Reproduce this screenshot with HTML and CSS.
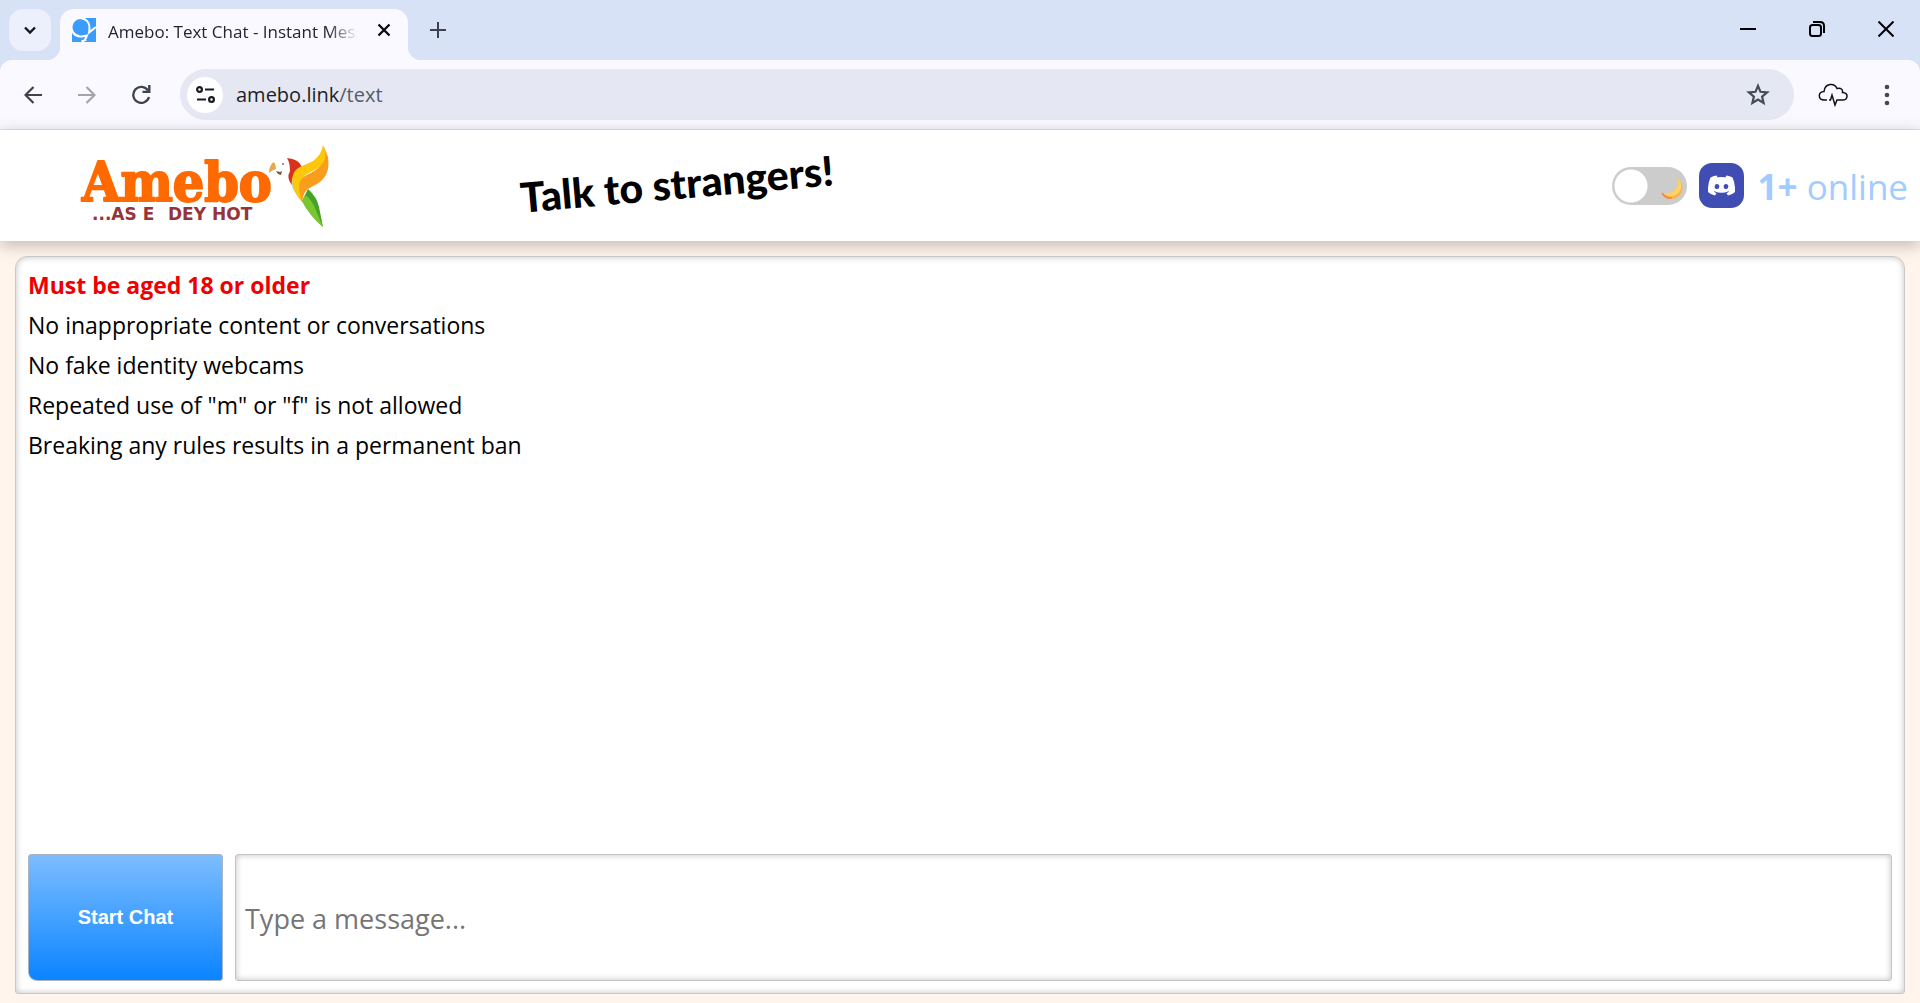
FILE: index.html
```html
<!DOCTYPE html>
<html lang="en">
<head>
<meta charset="utf-8">
<title>Amebo: Text Chat - Instant Messaging</title>
<link rel="stylesheet" href="styles.css">
</head>
<body>
<div class="browser">
  <div class="tab-strip">
    <button class="tab-search" aria-label="Search tabs">
      <svg width="14" height="14" viewBox="0 0 14 14"><path d="M2 4.500l5 5 5-5" fill="none" stroke="#15181f" stroke-width="2.400"/></svg>
    </button>
    <div class="tab">
      <svg class="favicon" width="24" height="24" viewBox="0 0 24 24">
        <rect width="24" height="24" fill="#3b9cff"/>
        <path d="M0 0h5Q1 3 0 8z" fill="#fff"/>
        <path d="M7 18A9 9 0 1 1 17.500 9q0 3-.5 5.500L24 9M1 15q3 4 9 3.500l5-1q-1 4-5 7M9.500 23l5-1.500" fill="none" stroke="#fff" stroke-width="2"/>
      </svg>
      <span class="tab-title">Amebo: Text Chat - Instant Mess</span>
      <button class="tab-close" aria-label="Close tab">
        <svg width="14" height="14" viewBox="0 0 14 14"><path d="M1.500 1.500l11 11M12.500 1.500l-11 11" stroke="#0b0c0f" stroke-width="2.400"/></svg>
      </button>
    </div>
    <button class="new-tab" aria-label="New tab">
      <svg width="16" height="16" viewBox="0 0 16 16"><path d="M8 0v16M0 8h16" stroke="#3b414d" stroke-width="2"/></svg>
    </button>
    <div class="window-buttons">
      <button aria-label="Minimize"><svg width="16" height="16" viewBox="0 0 16 16"><path d="M0 8h16" stroke="#000" stroke-width="2"/></svg></button>
      <button aria-label="Restore"><svg width="16" height="16" viewBox="0 0 16 16" fill="none" stroke="#000" stroke-width="2"><rect x="1" y="4" width="11" height="11" rx="2.500"/><path d="M4 1h7q4 0 4 4v7"/></svg></button>
      <button aria-label="Close"><svg width="16" height="16" viewBox="0 0 16 16"><path d="M.5.5l15 15M15.500.5l-15 15" stroke="#000" stroke-width="2"/></svg></button>
    </div>
  </div>
  <div class="toolbar">
    <button class="nav-button" aria-label="Back"><svg width="18" height="18" viewBox="0 0 18 18" fill="none" stroke="#3e434f" stroke-width="2.200"><path d="M18 9H2M9.500 1L1.500 9l8 8"/></svg></button>
    <button class="nav-button" aria-label="Forward"><svg width="18" height="18" viewBox="0 0 18 18" fill="none" stroke="#a3a5ab" stroke-width="2.200"><path d="M0 9h16M8.500 1l8 8-8 8"/></svg></button>
    <button class="nav-button" aria-label="Reload"><svg width="19" height="19" viewBox="0 0 19 19"><path d="M16 5.500A8 8 0 1 0 17 12" fill="none" stroke="#3e434f" stroke-width="2.300"/><path d="M18.500 0v8h-8V5.700h5.600V0z" fill="#3e434f"/></svg></button>
    <div class="address-bar">
      <button class="site-info" aria-label="Site information">
        <svg width="19" height="17" viewBox="0 0 19 17" fill="none" stroke="#17191e" stroke-width="2.200"><circle cx="3.500" cy="3.500" r="2.400"/><path d="M9 3.500h9M1 13.500h9"/><circle cx="15.500" cy="13.500" r="2.400"/></svg>
      </button>
      <span class="url">amebo.link<span class="url-path">/text</span></span>
      <button class="bookmark" aria-label="Bookmark">
        <svg width="24" height="23" viewBox="0 0 24 23"><path d="M12 2.800l2.500 6 6.600.6-5 4.200 1.500 6.400-5.600-3.400L6.400 20l1.500-6.400-5-4.200 6.600-.6z" fill="none" stroke="#454b57" stroke-width="2.200"/></svg>
      </button>
    </div>
    <button class="extension" aria-label="Extension">
      <svg width="30" height="24" viewBox="0 0 30 24" fill="none" stroke="#111" stroke-width="1.500"><path d="M9 17H6.500C-.5 17-.2 8.500 6 8.500 7 0 16.500-.5 19 5.500c4-1 6 1 5.500 4C31 10 30 17 24.500 17H20M11 17h1.500l1.500-5 3 10 2-5h1"/></svg>
    </button>
    <button class="menu" aria-label="Menu">
      <svg width="6" height="22" viewBox="0 0 6 22" fill="#434854"><circle cx="3" cy="3" r="2.300"/><circle cx="3" cy="11" r="2.300"/><circle cx="3" cy="19" r="2.300"/></svg>
    </button>
  </div>
</div>

<header class="site-header">
  <a class="logo" href="#" aria-label="Amebo home">
    <svg width="252" height="84" viewBox="0 0 252 84">
      <text class="logo-name" x="2" y="57">Amebo</text>
      <text class="logo-tag" x="12" y="76">...AS E</text>
      <text class="logo-tag" x="88" y="76">DEY HOT</text>
      <path d="M194 18q-5 3-5 11 3-3 7-4 0-4-2-7z" fill="#e9a54a"/>
      <path d="M196 27l4 1 2-1-1 4-3-1z" fill="#7b5634"/><circle cx="203" cy="20" r="1" fill="#777"/>
      <path d="M207 14q12 1 15 9l-8 8-2 10q-6-7-2-14 0-8-3-13z" fill="#d8321e"/>
      <path d="M212 35l2-4 3 20q-7-8-5-16z" fill="#b9d0e6"/>
      <path d="M222 57l6-12q9 8 11 18l4 20q-13-11-21-26z" fill="#46a329"/>
      <path d="M222 57l3-6q7 4 12 18l6 14q-13-11-21-26z" fill="#7ac62e"/>
      <path d="M243 1q3 6 5 12c1 9 1 17-8 25-5 4-11 5-14 9-3 3-3 7-4 11-5-8-8-19 1-25 11-6 24-9 20-32z" fill="#f99d1c"/>
      <path d="M243 1c8 18-5 23-16 29-11 7-8 16-5 28-9-10-14-25-5-33 9-7 22-5 26-24z" fill="#fdc70c"/>
    </svg>
  </a>
  <div class="slogan">Talk to strangers!</div>
  <div class="header-tools">
    <label class="theme-switch">
      <input type="checkbox" aria-label="Dark mode">
      <svg class="moon" width="24" height="24" viewBox="0 0 24 24"><path d="M17 1c9 9 3 21-7 21-4 0-8-2-9-6 12 2 17-5 16-15z" fill="#f9b548"/><path d="M17 1c7 8 2 17-6 18-4 0-8-1-10-3 12 2 17-5 16-15z" fill="#fdd267"/><path d="M1 16q4 6 10 5" fill="none" stroke="#ee8548" stroke-width="1.500"/></svg>
    </label>
    <a class="discord" href="#" aria-label="Discord">
      <svg width="27" height="21" viewBox="0 0 27 21"><path d="M8.500.5Q5 1 2.500 2.500-.5 9 0 17q3 3 7 3.500l1.500-2.300-2.500-1.400.5-.6q7 3 14 0l.5.600-2.500 1.400 1.500 2.300q4-.5 7-3.500.5-8-2.500-14.500Q22 1 18.500.5l-1 1.800q-4-.6-8 0z" fill="#fff"/><ellipse cx="9" cy="11.500" rx="2.300" ry="2.600" fill="#404eb4"/><ellipse cx="18" cy="11.500" rx="2.300" ry="2.600" fill="#404eb4"/></svg>
    </a>
    <div class="online"><strong>1+</strong> online</div>
  </div>
</header>

<main class="chat">
  <div class="messages">
    <p class="warning">Must be aged 18 or older</p>
    <p>No inappropriate content or conversations</p>
    <p>No fake identity webcams</p>
    <p>Repeated use of "m" or "f" is not allowed</p>
    <p>Breaking any rules results in a permanent ban</p>
  </div>
  <form class="composer">
    <button class="start" type="button">Start Chat</button>
    <input class="message" type="text" placeholder="Type a message..." aria-label="Message">
  </form>
</main>
</body>
</html>
```
FILE: styles.css
```css
* { box-sizing: border-box; }

body {
  margin: 0;
  min-height: 100vh;
  display: flex;
  flex-direction: column;
  background: #fff5ec;
  font-family: "Open Sans", "Noto Sans", sans-serif;
  color: #000;
}

button {
  border: 0;
  padding: 0;
  background: none;
  display: flex;
  align-items: center;
  justify-content: center;
}

p { margin: 0; }

/* Browser frame */
.browser {
  background: #d8e2f7;
}

.tab-strip {
  display: flex;
  height: 60px;
  padding-left: 9px;
}

.tab-search {
  width: 42px;
  height: 42px;
  margin-top: 9px;
  border-radius: 14px;
  background: #ecf0fd;
}

.tab {
  position: relative;
  display: flex;
  align-items: center;
  width: 348px;
  height: 51px;
  margin: 9px 0 0 9px;
  padding: 0 14px 9px 12px;
  border-radius: 14px 14px 0 0;
  background: #faf9ff;
}

.tab::before,
.tab::after {
  content: "";
  position: absolute;
  bottom: 0;
  width: 14px;
  height: 14px;
}

.tab::before {
  right: 100%;
  background: radial-gradient(circle at 0 0, transparent 14px, #faf9ff 15px);
}

.tab::after {
  left: 100%;
  background: radial-gradient(circle at 100% 0, transparent 14px, #faf9ff 15px);
}

.tab-title {
  flex: 1;
  margin: 3px 16px 0 12px;
  overflow: hidden;
  white-space: nowrap;
  font-size: 17px;
  line-height: 24px;
  color: #23262e;
  mask-image: linear-gradient(to right, #000 88%, transparent);
}

.tab-close { width: 20px; height: 24px; }

.new-tab {
  width: 32px;
  height: 60px;
  margin-left: 14px;
}

.window-buttons {
  display: flex;
  margin-left: auto;
}

.window-buttons button {
  width: 69px;
  height: 58px;
}

.toolbar {
  display: flex;
  align-items: center;
  height: 70px;
  padding: 0 21px 0 6px;
  border-bottom: 1px solid #dfe2f1;
  border-radius: 12px 12px 0 0;
  background: #faf9ff;
}

.nav-button {
  width: 54px;
  height: 46px;
}

.address-bar {
  flex: 1;
  display: flex;
  align-items: center;
  height: 51px;
  margin-left: 12px;
  padding: 0 24px 0 7px;
  border-radius: 26px;
  background: #e5e8f3;
}

.site-info {
  width: 36px;
  height: 36px;
  border-radius: 50%;
  background: #fff;
}

.url {
  margin-left: 13px;
  font-size: 20px;
  line-height: 28px;
  color: #1c1f27;
}

.url-path { color: #555b67; }

.bookmark { margin-left: auto; }

.extension { margin-left: 24px; }

.menu { width: 24px; margin-left: 27px; }

/* Site header */
.site-header {
  display: flex;
  align-items: center;
  min-height: 111px;
  padding: 0 12px 0 80px;
  background: #fff;
  box-shadow: 0 4px 16px rgba(0, 0, 0, 0.26);
}

.logo svg { display: block; }

.logo-name {
  font-family: "DejaVu Serif Condensed", "DejaVu Serif", serif;
  font-size: 55px;
  font-weight: 700;
  fill: #ff6a00;
  stroke: #ff6a00;
  stroke-width: 2px;
  stroke-linejoin: round;
}

.logo-tag {
  font-family: "DejaVu Sans", sans-serif;
  font-size: 17px;
  font-weight: 700;
  fill: #95343a;
}

.slogan {
  margin-left: 188px;
  padding-bottom: 4px;
  font-family: Lato, sans-serif;
  font-size: 41px;
  font-weight: 900;
  line-height: 48px;
  white-space: nowrap;
  transform: rotate(-5deg);
}

.header-tools {
  display: flex;
  align-items: center;
  gap: 12px;
  margin-left: auto;
}

.theme-switch {
  position: relative;
  width: 75px;
  height: 38px;
}

.theme-switch input {
  appearance: none;
  width: 100%;
  height: 100%;
  margin: 0;
  border-radius: 19px;
  background: radial-gradient(circle at 19px 19px, #fff 16px, #ccc 17px);
}

.moon {
  position: absolute;
  right: 2px;
  bottom: 4px;
}

.discord {
  display: grid;
  place-items: center;
  width: 45px;
  height: 45px;
  border-radius: 13px;
  background: #404eb4;
}

.online {
  padding: 3px 0 0 2px;
  font-size: 35px;
  line-height: 46px;
  color: #a2ccff;
  white-space: nowrap;
}

/* Chat panel */
.chat {
  flex: 1;
  display: flex;
  flex-direction: column;
  margin: 15px 15px 9px;
  padding: 8px 12px 12px;
  border: 1px solid #c8c8c8;
  border-radius: 12px 12px 3px 3px;
  background: #fff;
  box-shadow: inset 0 0 6px rgba(0, 0, 0, 0.25);
}

.messages {
  flex: 1;
  font-size: 23px;
  line-height: 40px;
}

.warning {
  font-weight: 700;
  color: #ee0000;
}

.composer {
  display: flex;
  gap: 12px;
  height: 127px;
}

.start {
  width: 195px;
  border: 1px solid #a9b4c4;
  border-radius: 3px 3px 3px 9px;
  background: linear-gradient(#7dbdff, #0a84ff);
  font-family: "Liberation Sans", Arial, sans-serif;
  font-size: 20px;
  font-weight: 700;
  color: #fff;
}

.message {
  flex: 1;
  min-width: 0;
  padding: 2px 9px 0;
  border: 1px solid #c4c4c4;
  border-radius: 3px;
  background: #fff;
  box-shadow: inset 0 0 6px rgba(0, 0, 0, 0.25);
  font: 27px "Open Sans", "Noto Sans", sans-serif;
  color: #000;
}

.message::placeholder { color: #757575; opacity: 1; }
```
